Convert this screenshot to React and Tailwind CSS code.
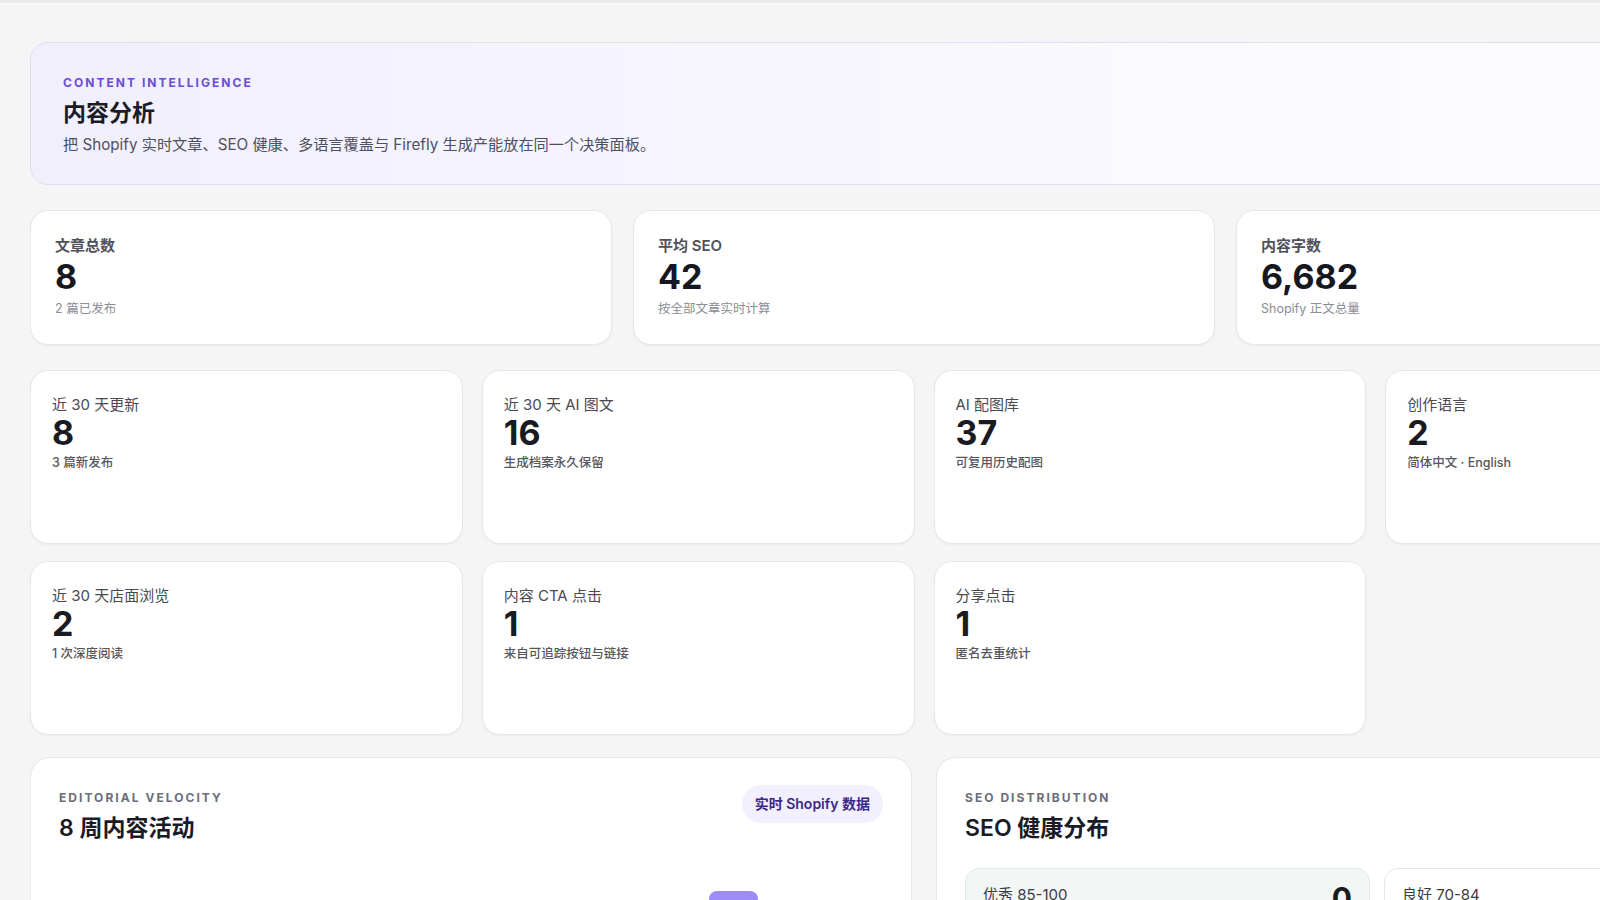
import React from 'react';

const topStats = [
  { label: '文章总数', value: '8', note: '2 篇已发布' },
  { label: '平均 SEO', value: '42', note: '按全部文章实时计算' },
  { label: '内容字数', value: '6,682', note: 'Shopify 正文总量' },
];

const activityStats = [
  { label: '近 30 天更新', value: '8', note: '3 篇新发布' },
  { label: '近 30 天 AI 图文', value: '16', note: '生成档案永久保留' },
  { label: 'AI 配图库', value: '37', note: '可复用历史配图' },
  { label: '创作语言', value: '2', note: '简体中文 · English' },
  { label: '近 30 天店面浏览', value: '2', note: '1 次深度阅读' },
  { label: '内容 CTA 点击', value: '1', note: '来自可追踪按钮与链接' },
  { label: '分享点击', value: '1', note: '匿名去重统计' },
];

// 8 周柱状图，只有最高那根露出首屏
const weeks = [
  { label: 'W1', count: 0 },
  { label: 'W2', count: 0 },
  { label: 'W3', count: 0 },
  { label: 'W4', count: 1 },
  { label: 'W5', count: 0 },
  { label: 'W6', count: 2 },
  { label: 'W7', count: 8 },
  { label: 'W8', count: 1 },
];

const seoBands = [
  { label: '优秀 85-100', value: 0, tone: 'mint' },
  { label: '良好 70-84', value: 0, tone: 'plain' },
];

function Eyebrow({ children, className = '' }) {
  return (
    <div className={`text-[12px] leading-4 font-bold uppercase tracking-[0.17em] ${className}`}>
      {children}
    </div>
  );
}

export default function App() {
  const maxWeek = Math.max(...weeks.map((w) => w.count));

  return (
    <div
      className="h-screen w-full overflow-hidden bg-[#f5f5f5] text-[#1c1c24]"
      style={{ fontFamily: 'Inter, "Noto Sans CJK SC", "Noto Sans", sans-serif' }}
    >
      <div className="h-[4px] bg-[#ececec] border-b border-[#fafafa]" />

      <div className="w-[1848px] px-[30px] pt-[38px]">
        {/* Hero */}
        <section className="rounded-[18px] border border-[#e1ddf3] bg-linear-to-r from-[#f2effd] via-[#f8f7ff] to-[#fefeff] px-8 pt-8 pb-7">
          <Eyebrow className="text-[#6a4bd6]">Content Intelligence</Eyebrow>
          <h1 className="mt-[7px] text-[23px] leading-[30px] font-bold text-[#1b1b26]">内容分析</h1>
          <p className="mt-[6px] text-[15.2px] leading-[22px] text-[#4d5060]">
            把 Shopify 实时文章、SEO 健康、多语言覆盖与 Firefly 生成产能放在同一个决策面板。
          </p>
        </section>

        {/* 总览 */}
        <div className="mt-[25px] grid grid-cols-3 gap-x-[21px]">
          {topStats.map((s) => (
            <div
              key={s.label}
              className="h-[135px] rounded-[18px] border border-[#e7e7e7] bg-white px-6 pt-[25px] shadow-[0_1px_2px_rgba(0,0,0,0.04)]"
            >
              <div className="text-[15px] leading-5 font-semibold text-[#50515a]">{s.label}</div>
              <div className="mt-[4px] text-[34px] leading-[34px] font-bold text-[#17171f]">{s.value}</div>
              <div className="mt-[7px] text-[12.5px] leading-4 text-[#8a8d96]">{s.note}</div>
            </div>
          ))}
        </div>

        {/* 活动指标 */}
        <div className="mt-[25px] grid grid-cols-4 gap-x-[19px] gap-y-[17px]">
          {activityStats.map((s) => (
            <div
              key={s.label}
              className="h-[174px] rounded-[18px] border border-[#e7e7e7] bg-white px-[21px] pt-[24px] shadow-[0_1px_2px_rgba(0,0,0,0.04)]"
            >
              <div className="text-[15px] leading-5 text-[#4a4a52]">{s.label}</div>
              <div className="mt-[1px] text-[34px] leading-[34px] font-bold text-[#1a1a22]">{s.value}</div>
              <div className="mt-[5px] text-[12.5px] leading-4 font-medium text-[#55565e]">{s.note}</div>
            </div>
          ))}
        </div>

        {/* 图表面板 */}
        <div className="mt-[22px] grid grid-cols-2 gap-6">
          <section className="rounded-[20px] border border-[#e7e7e7] bg-white px-7 pt-[32px] pb-8 shadow-[0_1px_2px_rgba(0,0,0,0.04)]">
            <div className="flex items-start justify-between">
              <div>
                <Eyebrow className="text-[#6b6e78]">Editorial Velocity</Eyebrow>
                <h2 className="mt-[7px] text-[23px] leading-[30px] font-semibold text-[#1b1b26]">8 周内容活动</h2>
              </div>
              <span className="-mt-[5px] rounded-full bg-[#f2effe] px-[13px] py-[9px] text-[14px] leading-5 font-semibold text-[#3a2889]">
                实时 Shopify 数据
              </span>
            </div>
            <div className="mt-[28px] flex h-[240px] items-end pl-[26px]">
              {weeks.map((w) => (
                <div key={w.label} className="flex flex-1 justify-center">
                  <div
                    className="w-[49px] rounded-t-[8px] bg-[#9d8bf6]"
                    style={{ height: `${Math.max(4, (w.count / maxWeek) * 220)}px` }}
                  />
                </div>
              ))}
            </div>
          </section>

          <section className="rounded-[20px] border border-[#e7e7e7] bg-white px-7 pt-[32px] pb-8 shadow-[0_1px_2px_rgba(0,0,0,0.04)]">
            <Eyebrow className="text-[#6b6e78]">SEO Distribution</Eyebrow>
            <h2 className="mt-[7px] text-[23px] leading-[30px] font-semibold text-[#1b1b26]">SEO 健康分布</h2>
            <div className="mt-[25px] grid grid-cols-2 gap-[14px]">
              {seoBands.map((b) => (
                <div
                  key={b.label}
                  className={
                    b.tone === 'mint'
                      ? 'flex h-[96px] items-start justify-between rounded-[14px] border border-[#e0e8e5] bg-[#f2f6f5] px-[17px] pt-[14px]'
                      : 'flex h-[96px] items-start justify-between rounded-[14px] border border-[#e6e6e6] bg-white px-[17px] pt-[14px]'
                  }
                >
                  <span className="mt-[2px] text-[15px] leading-5 text-[#3a3b44]">{b.label}</span>
                  <span className="text-[30px] leading-[30px] font-bold text-[#1a1a22]">{b.value}</span>
                </div>
              ))}
            </div>
          </section>
        </div>
      </div>
    </div>
  );
}
